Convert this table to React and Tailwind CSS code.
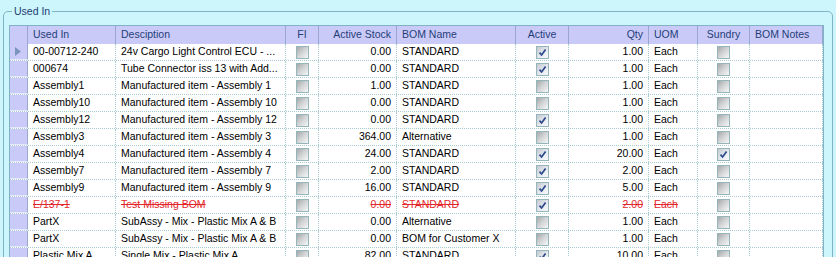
import React from "react";

const cols = [
  { key: "used", label: "Used In", w: "w-[88px]", align: "left" },
  { key: "desc", label: "Desciption", w: "w-[170px]", align: "left" },
  { key: "fi", label: "FI", w: "w-[33px]", align: "center" },
  { key: "stock", label: "Active Stock", w: "w-[78px]", align: "right" },
  { key: "bom", label: "BOM Name", w: "w-[119px]", align: "left" },
  { key: "active", label: "Active", w: "w-[53px]", align: "center" },
  { key: "qty", label: "Qty", w: "w-[80px]", align: "right" },
  { key: "uom", label: "UOM", w: "w-[49px]", align: "left" },
  { key: "sundry", label: "Sundry", w: "w-[52px]", align: "center" },
  { key: "notes", label: "BOM Notes", w: "w-[73px]", align: "left" },
];

const rows = [
  { used: "00-00712-240", desc: "24v Cargo Light Control ECU - ...", fi: false, stock: "0.00", bom: "STANDARD", active: true, qty: "1.00", uom: "Each", sundry: false, current: true },
  { used: "000674", desc: "Tube Connector iss 13 with Add...", fi: false, stock: "0.00", bom: "STANDARD", active: true, qty: "1.00", uom: "Each", sundry: false },
  { used: "Assembly1", desc: "Manufactured item - Assembly 1", fi: false, stock: "1.00", bom: "STANDARD", active: false, qty: "1.00", uom: "Each", sundry: false },
  { used: "Assembly10", desc: "Manufactured item - Assembly 10", fi: false, stock: "0.00", bom: "STANDARD", active: false, qty: "1.00", uom: "Each", sundry: false },
  { used: "Assembly12", desc: "Manufactured item - Assembly 12", fi: false, stock: "0.00", bom: "STANDARD", active: true, qty: "1.00", uom: "Each", sundry: false },
  { used: "Assembly3", desc: "Manufactured item - Assembly 3", fi: false, stock: "364.00", bom: "Alternative", active: false, qty: "1.00", uom: "Each", sundry: false },
  { used: "Assembly4", desc: "Manufactured item - Assembly 4", fi: false, stock: "24.00", bom: "STANDARD", active: true, qty: "20.00", uom: "Each", sundry: true },
  { used: "Assembly7", desc: "Manufactured item - Assembly 7", fi: false, stock: "2.00", bom: "STANDARD", active: true, qty: "2.00", uom: "Each", sundry: false },
  { used: "Assembly9", desc: "Manufactured item - Assembly 9", fi: false, stock: "16.00", bom: "STANDARD", active: true, qty: "5.00", uom: "Each", sundry: false },
  { used: "E/137-1", desc: "Test Missing BOM", fi: false, stock: "0.00", bom: "STANDARD", active: true, qty: "2.00", uom: "Each", sundry: false, missing: true },
  { used: "PartX", desc: "SubAssy - Mix - Plastic Mix A & B", fi: false, stock: "0.00", bom: "Alternative", active: false, qty: "1.00", uom: "Each", sundry: false },
  { used: "PartX", desc: "SubAssy - Mix - Plastic Mix A & B", fi: false, stock: "0.00", bom: "BOM for Customer X", active: false, qty: "1.00", uom: "Each", sundry: false },
  { used: "Plastic Mix A", desc: "Single Mix - Plastic Mix A", fi: false, stock: "82.00", bom: "STANDARD", active: true, qty: "10.00", uom: "Each", sundry: false },
];

function Check({ on }) {
  return (
    <span
      className={
        "flex items-center justify-center w-[13px] h-[13px] border border-[#94b6ba] " +
        (on
          ? "bg-[linear-gradient(135deg,#c4c9d2,#eef1f5_70%,#f8f9fa)]"
          : "bg-[linear-gradient(135deg,#a6a9ab,#d3d5d6_50%,#f6f7f7)]")
      }
    >
      {on && (
        <svg width="9" height="9" viewBox="0 0 9 9">
          <path d="M1.5 4.6 L3.6 7 L7.6 1.4" fill="none" stroke="#2c4a8c" strokeWidth="1.7" />
        </svg>
      )}
    </span>
  );
}

function Cell({ col, row }) {
  const v = row[col.key];
  const base = "h-full flex items-center border-r border-dotted border-[#a9ccd2] whitespace-nowrap overflow-hidden " + col.w;
  if (col.align === "center") {
    return <div className={base + " justify-center"}><Check on={v} /></div>;
  }
  const txt = row.missing ? "text-[#e3262b] line-through decoration-[#e3262b]" : "text-black";
  return (
    <div className={base + (col.align === "right" ? " justify-end pr-[5px]" : " pl-[5px]")}>
      <span className={txt}>{v}</span>
    </div>
  );
}

export default function App() {
  return (
    <div className="w-[836px] h-[257px] overflow-hidden bg-[#ccf6fc] pl-[3px] pt-[4px] font-['Liberation_Sans',Arial,sans-serif] text-[10.5px]">
      <fieldset className="w-[830px] h-[320px] border border-[#7fb3c5] rounded-t-[5px] pl-[5px]">
        <legend className="ml-[3px] px-[2px] leading-[14px] text-[#1f3c74]">Used In</legend>
        <div className="mt-[7px] w-[815px] border border-[#7fb3c5] bg-white">
          <div className="flex h-[18px] bg-[#cacaf8] text-[#243f78]">
            <div className="w-[18px] border-r border-[#9aa6cf]" />
            {cols.map(c => (
              <div
                key={c.key}
                className={
                  "h-full flex items-center border-r border-[#9aa6cf] whitespace-nowrap " + c.w + " " +
                  (c.align === "right" ? "justify-end pr-[5px]" : c.align === "center" ? "justify-center" : "pl-[5px]")
                }
              >
                {c.label}
              </div>
            ))}
          </div>
          {rows.map((r, i) => (
            <div key={i} className="flex h-[17px] border-b border-dotted border-[#a9ccd2]">
              <div className="w-[18px] h-full flex items-center pl-[5px] bg-[#cacaf8] border-r border-[#9aa6cf] -mb-px border-b border-b-[#e6e6fc]">
                {r.current && (
                  <svg width="6" height="9" viewBox="0 0 6 9">
                    <path d="M0 0 L6 4.5 L0 9 Z" fill="#7d93bf" />
                  </svg>
                )}
              </div>
              {cols.map(c => <Cell key={c.key} col={c} row={r} />)}
            </div>
          ))}
        </div>
      </fieldset>
    </div>
  );
}
